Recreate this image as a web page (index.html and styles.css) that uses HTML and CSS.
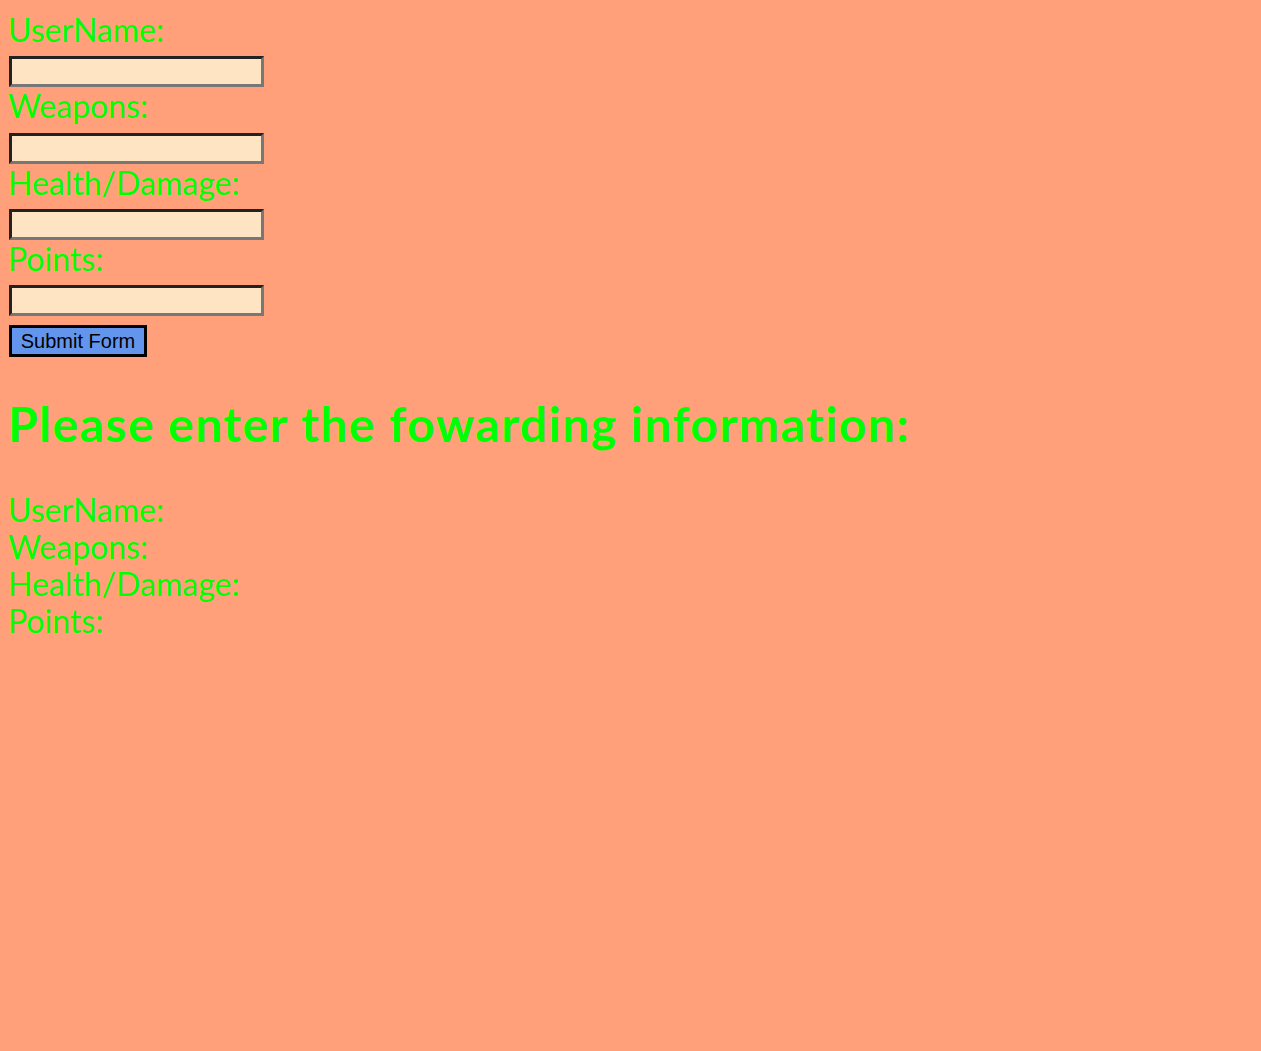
FILE: index.html
```html
<!DOCTYPE html>
<html>
<head>
<meta charset="utf-8">
<title>Forwarding Form</title>
<link rel="stylesheet" href="styles.css">
</head>
<body>
<form class="entry-form">
  <label class="field-label" for="username">UserName:</label>
  <input class="field-input" id="username" type="text">
  <label class="field-label" for="weapons">Weapons:</label>
  <input class="field-input" id="weapons" type="text">
  <label class="field-label" for="health">Health/Damage:</label>
  <input class="field-input" id="health" type="text">
  <label class="field-label" for="points">Points:</label>
  <input class="field-input" id="points" type="text">
  <button class="submit-btn" type="button">Submit Form</button>
</form>
<h1 class="forward-title">Please enter the fowarding information:</h1>
<div class="summary">
  <div class="summary-line">UserName:</div>
  <div class="summary-line">Weapons:</div>
  <div class="summary-line">Health/Damage:</div>
  <div class="summary-line">Points:</div>
</div>
</body>
</html>
```
FILE: styles.css
```css
html {
  background: #ffa07a;
}
body {
  margin: 8px;
  background: #ffa07a;
  color: #00ff00;
  font-family: Lato, "Open Sans", sans-serif;
  font-variant-ligatures: none;
}
.entry-form {
  display: flex;
  flex-direction: column;
  align-items: flex-start;
  padding-top: 3px;
  margin: 0;
}
.field-label {
  font-size: 32px;
  line-height: 37px;
  color: #00ff00;
}
.field-input {
  box-sizing: border-box;
  width: 255px;
  height: 31px;
  margin: 8.33px 0 0 1px;
  padding: 0 4px;
  background: #ffe4c4;
  border-style: solid;
  border-width: 3px;
  border-color: #222222 #777777 #777777 #222222;
  font-size: 16px;
  outline: none;
}
.submit-btn {
  box-sizing: border-box;
  width: 138px;
  height: 32px;
  margin: 9px 0 0 1px;
  padding: 0;
  background: #6495ed;
  border: 3px solid #000000;
  color: #000000;
  font-family: "Liberation Sans", Arial, sans-serif;
  font-size: 20px;
  line-height: 23px;
}
.forward-title {
  margin: 38px 0 0 0;
  font-size: 48px;
  line-height: 58px;
  font-weight: bold;
  letter-spacing: 1.45px;
  color: #00ff00;
}
.summary {
  margin-top: 38px;
  display: flex;
  flex-direction: column;
}
.summary-line {
  font-size: 32px;
  line-height: 37px;
}
```
